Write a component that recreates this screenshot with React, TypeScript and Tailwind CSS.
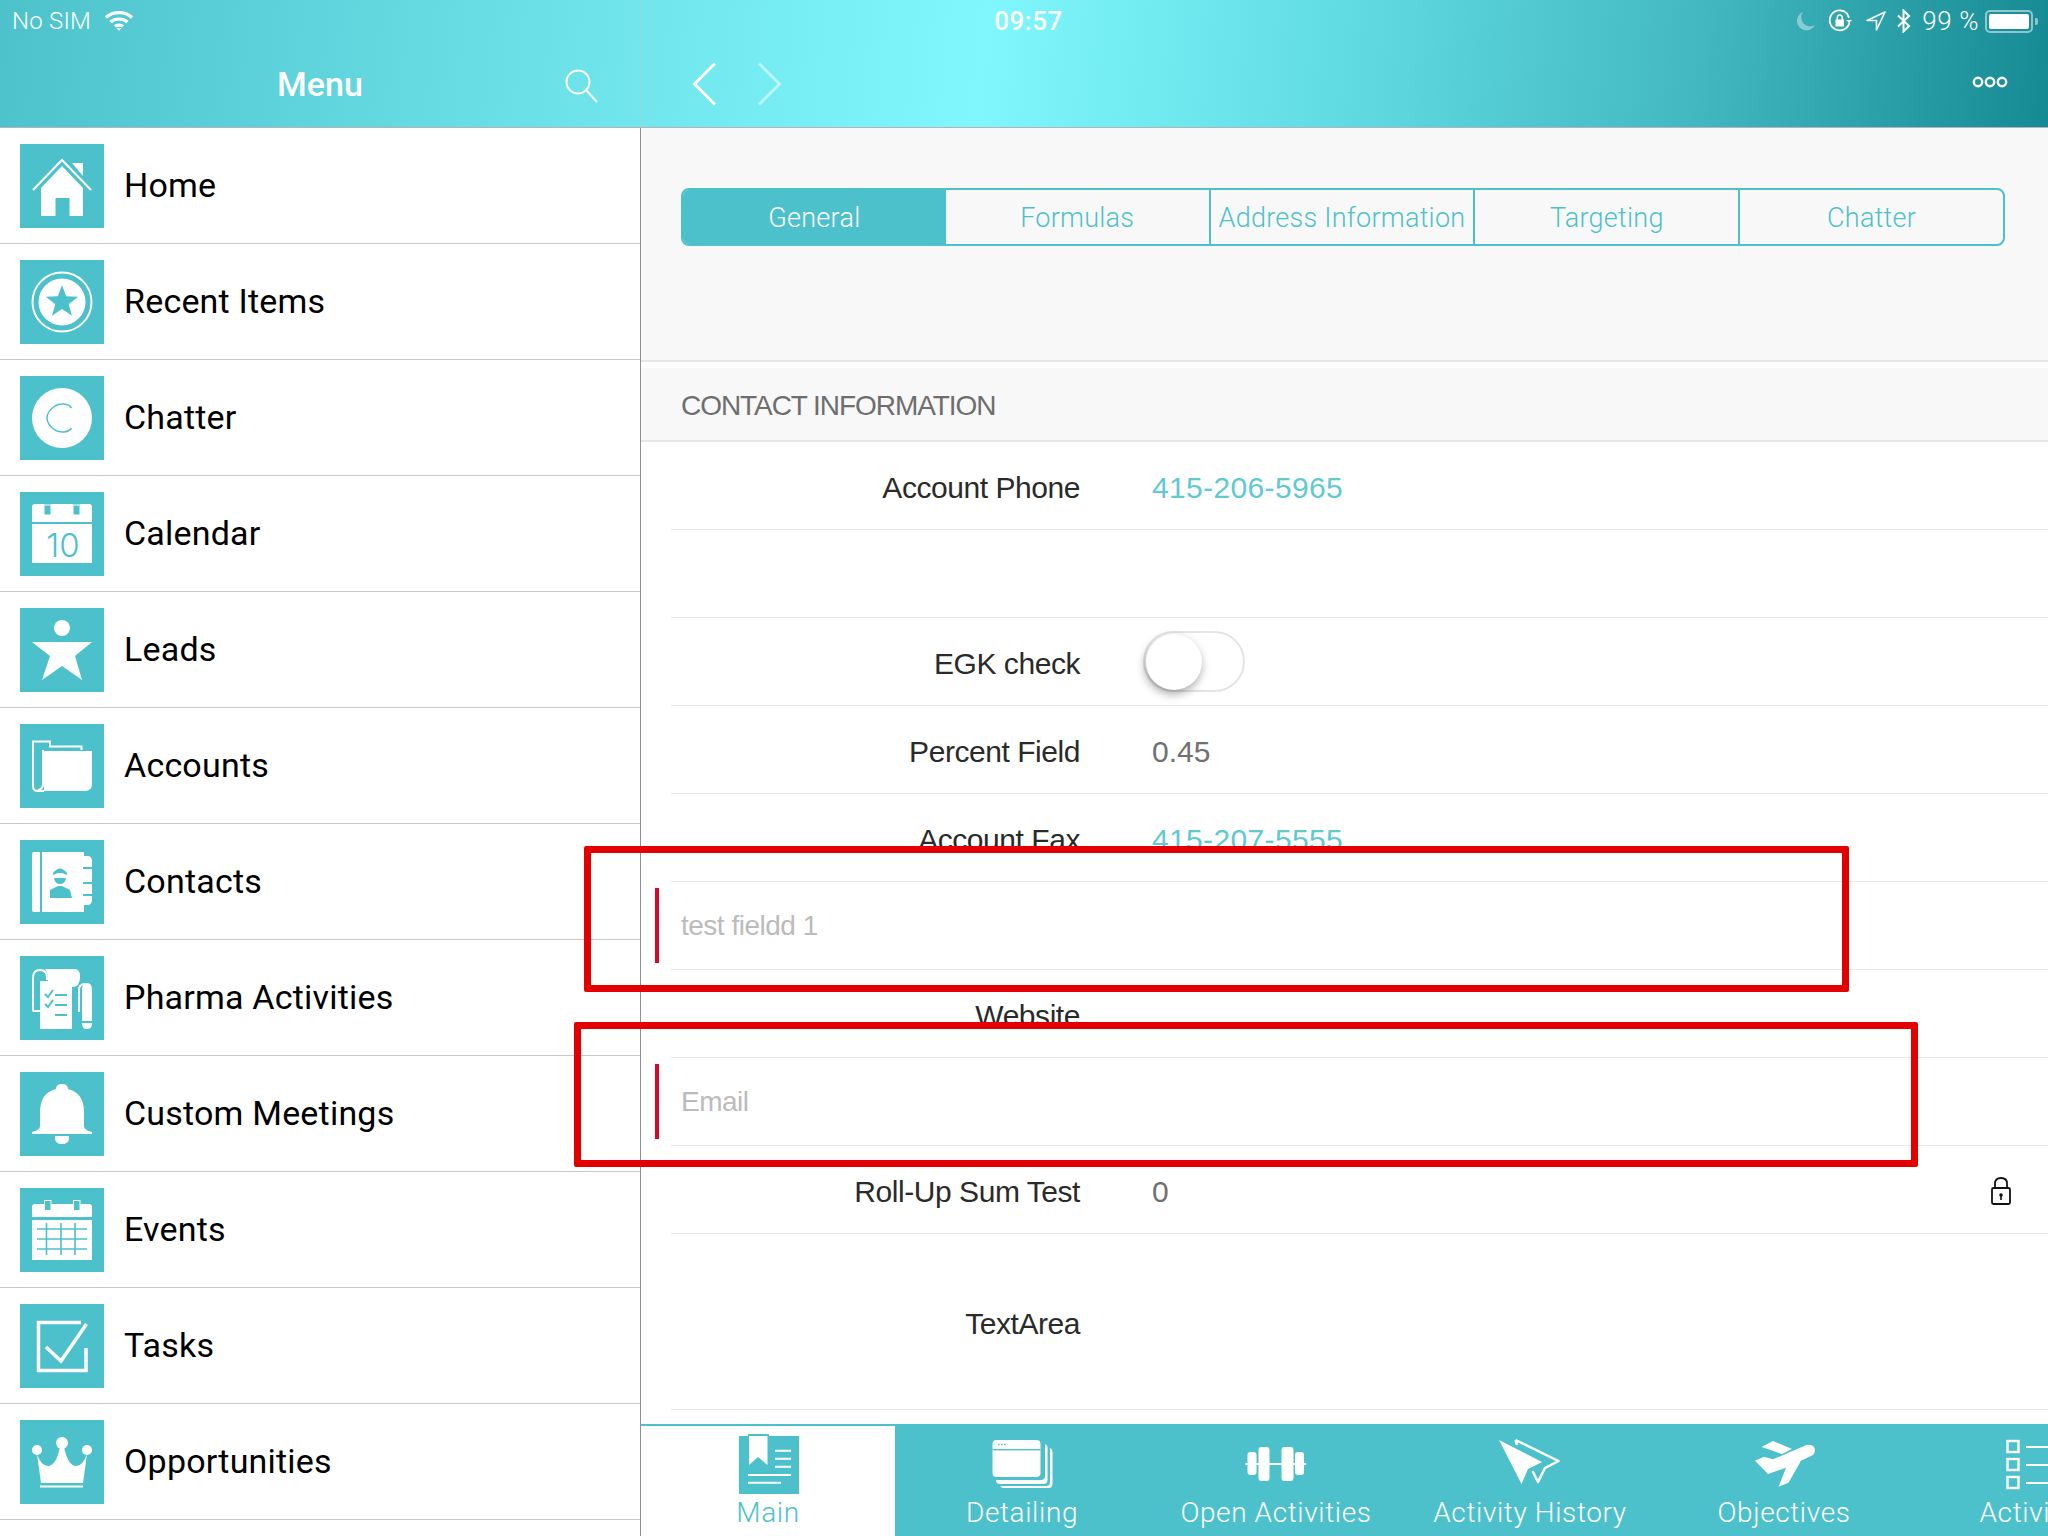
import React from "react";

const T = "#4dc1cb";

function HomeI() {
  return (
    <>
      <path d="M13 46 42 16 71 46" fill="none" stroke="#fff" strokeWidth="2" />
      <path d="M52 19H63V32Z" fill="#fff" />
      <path d="M42 22 63 44V72H49.5V54H35.5V72H21V44Z" fill="#fff" />
    </>
  );
}
function RecentI() {
  return (
    <>
      <circle cx="42" cy="42" r="29.5" fill="none" stroke="#fff" strokeWidth="2" />
      <circle cx="42" cy="42" r="23.5" fill="#fff" />
      <path d="M42 25 46.1 36.3 58.2 36.7 48.7 44.2 52 55.8 42 49 32 55.8 35.3 44.2 25.8 36.7 37.9 36.3Z" fill={T} />
    </>
  );
}
function ChatterI() {
  return (
    <>
      <circle cx="42" cy="42" r="30" fill="#fff" />
      <path d="M51.5 32C48 27 40 27 35 30 29 34 27 38 27 42 27 46 29 50 35 54 40 57 48 57 51.5 52" fill="none" stroke={T} strokeWidth="1.5" />
    </>
  );
}
function CalendarI() {
  return (
    <>
      <path d="M12 15Q12 12 15 12H24V23H31V12H53V23H60V12H69Q72 12 72 15V30H12Z" fill="#fff" />
      <rect x="24" y="13" width="7" height="10" fill={T} stroke="#fff" strokeWidth="1" />
      <rect x="53" y="13" width="7" height="10" fill={T} stroke="#fff" strokeWidth="1" />
      <rect x="12" y="32" width="60" height="39" fill="#fff" />
      <text x="43" y="65" textAnchor="middle" fontSize="33" fontWeight="300" fontFamily="Inter, sans-serif" fill={T}>10</text>
    </>
  );
}
function LeadsI() {
  return (
    <>
      <ellipse cx="42" cy="20" rx="8" ry="8" fill="#fff" />
      <path d="M12 34H72L55 48 62 72 42 58 22 72 30 48Z" fill="#fff" />
    </>
  );
}
function AccountsI() {
  return (
    <>
      <path d="M24 27H72V60Q72 67 65 67H24Z" fill="#fff" />
      <path d="M61.5 26V22.5H30V17.5H13V62Q13 67 18 67H24" fill="none" stroke="#fff" strokeWidth="2" />
      <path d="M23 26V60Q23 65 18 66" fill="none" stroke="#fff" strokeWidth="2" />
    </>
  );
}
function ContactsI() {
  return (
    <>
      <path d="M14 12H20V72H14Q12 72 12 70V14Q12 12 14 12Z" fill="#fff" />
      <rect x="22" y="12" width="42" height="60" fill="#fff" />
      <path d="M64 16H67Q72 16 72 21V60Q72 65 67 65H64Z" fill="#fff" />
      <rect x="63" y="27" width="9" height="2" fill={T} />
      <rect x="63" y="42" width="9" height="2" fill={T} />
      <rect x="63" y="54" width="9" height="2" fill={T} />
      <path d="M33 33Q40 24 47 33V35L42 33H38L33 35Z" fill={T} />
      <path d="M34 38H46Q45 44 40 44 35 44 34 38Z" fill={T} />
      <path d="M30 50 38 46H42L50 50 52 58H30Z" fill={T} />
    </>
  );
}
function PharmaI() {
  return (
    <>
      <path d="M13 55V22Q13 14 20 14 27 14 27 22V24" fill="none" stroke="#fff" strokeWidth="2" />
      <path d="M12.5 55H20" stroke="#fff" strokeWidth="2" />
      <path d="M25 13H55Q60 13 60 21 60 31 52 31V73H20V25H28Q28 16 25 13Z" fill="#fff" />
      <path d="M25 38 28 41 33 34M25 48 28 51 33 44" fill="none" stroke={T} strokeWidth="2" />
      <path d="M35 39H47M35 49H47M35 59H47" stroke={T} strokeWidth="2" />
      <path d="M59 56V34Q59 28 65 28" fill="none" stroke="#fff" strokeWidth="2" />
      <path d="M62 65V34Q62 27 67 27 72 27 72 34V65Z" fill="#fff" />
      <path d="M62 67H72V68Q72 73 67 73 62 73 62 68Z" fill="#fff" />
    </>
  );
}
function BellI() {
  return (
    <>
      <path d="M36 17Q36 12 42 12 48 12 48 17 64 21 64 40V54Q64 58 72 60V62H12V60Q20 58 20 54V40Q20 21 36 17Z" fill="#fff" />
      <path d="M35 64H49V66Q49 72 42 72 35 72 35 66Z" fill="#fff" />
    </>
  );
}
function EventsI() {
  return (
    <>
      <path d="M12 19Q12 16 15 16H69Q72 16 72 19V29H12Z" fill="#fff" />
      <rect x="24.5" y="12.5" width="6.5" height="10" fill={T} stroke="#fff" strokeWidth="1" />
      <rect x="53.5" y="12.5" width="6.5" height="10" fill={T} stroke="#fff" strokeWidth="1" />
      <rect x="12" y="32" width="60" height="40" fill="#fff" />
      <path d="M17 41H67M17 51H67M17 61H67M26.5 35V67M41 35V67M55 35V67" stroke={T} strokeWidth="1.6" />
    </>
  );
}
function TasksI() {
  return (
    <>
      <path d="M61 18.5H18.5V66.5H66V44" fill="none" stroke="#fff" strokeWidth="3.5" />
      <path d="M26 43 41 57 66.5 20" fill="none" stroke="#fff" strokeWidth="3.5" />
    </>
  );
}
function CrownI() {
  return (
    <>
      <circle cx="17" cy="30" r="5" fill="#fff" />
      <circle cx="42" cy="23" r="6" fill="#fff" />
      <circle cx="67" cy="30" r="5" fill="#fff" />
      <path d="M17 34Q21 46 28 46 36 46 40 27H44Q48 46 56 46 63 46 67 34L63 63H21Z" fill="#fff" />
      <rect x="20" y="65.5" width="43" height="2" fill="#fff" />
    </>
  );
}

function MainI() {
  return (
    <>
      <rect x="12" y="2" width="21" height="4" fill={T} />
      <rect x="3" y="4" width="60" height="58" fill={T} />
      <path d="M13 4H31.5V33L22 25 13 33Z" fill="#fff" />
      <path d="M39 18.7H55M39 26.7H55M39 34.7H55M12 43H55M12 50.7H45" stroke="#fff" strokeWidth="2" />
    </>
  );
}
function DetailI() {
  return (
    <>
      <rect x="10" y="16" width="52.5" height="40" rx="4" fill="#fff" />
      <rect x="6" y="14" width="54" height="40" rx="4" fill={T} />
      <rect x="6" y="12" width="51.5" height="40" rx="4" fill="#fff" />
      <rect x="2" y="9" width="53" height="39" rx="4" fill={T} />
      <rect x="2.5" y="8" width="48" height="37" rx="4" fill="#fff" />
      <rect x="2.5" y="17" width="48" height="1.4" fill={T} />
      <path d="M8 12.5H9.5M11 12.5H12.5M14 12.5H15.5" stroke={T} strokeWidth="1.4" />
    </>
  );
}
function DumbI() {
  return (
    <>
      <path d="M1.5 32H62" stroke="#fff" strokeWidth="2" />
      <rect x="3.5" y="20" width="9" height="23" rx="3" fill="#fff" />
      <rect x="14.5" y="15" width="11" height="34" rx="3" fill="#fff" />
      <rect x="37.5" y="15" width="12" height="34" rx="3" fill="#fff" />
      <rect x="51" y="20" width="9" height="23" rx="3" fill="#fff" />
    </>
  );
}
function HistI() {
  return (
    <>
      <path d="M1 8 44 30 30 37 23.5 52Z" fill="#fff" />
      <path d="M17.5 8 60.5 29 47 36 40 50 34.5 39M17.5 8 19 13" fill="none" stroke="#fff" strokeWidth="2.5" strokeLinejoin="round" />
    </>
  );
}
function ObjI() {
  return (
    <>
      <path d="M9.6 15 21 9 40 17 30 22Z" fill="#fff" />
      <path d="M3 28.7 12 24.7 21 27.3 54.5 13Q60 12 62.6 16 63.5 21 61 23L49 28.7 36.5 50.7 26.6 54.7 34 35.7 16 42Z" fill="#fff" />
    </>
  );
}
function ListI() {
  return (
    <>
      <rect x="1.5" y="9" width="11" height="11" fill="none" stroke="#fff" strokeWidth="2.4" />
      <rect x="1.5" y="27" width="11" height="11" fill="none" stroke="#fff" strokeWidth="2.4" />
      <rect x="1.5" y="45" width="11" height="11" fill="none" stroke="#fff" strokeWidth="2.4" />
      <path d="M20 15H62M20 33H62M20 51H62" stroke="#fff" strokeWidth="2" />
    </>
  );
}

const menu: [string, React.ReactNode][] = [
  ["Home", <HomeI />],
  ["Recent Items", <RecentI />],
  ["Chatter", <ChatterI />],
  ["Calendar", <CalendarI />],
  ["Leads", <LeadsI />],
  ["Accounts", <AccountsI />],
  ["Contacts", <ContactsI />],
  ["Pharma Activities", <PharmaI />],
  ["Custom Meetings", <BellI />],
  ["Events", <EventsI />],
  ["Tasks", <TasksI />],
  ["Opportunities", <CrownI />],
];

const tabs: [string, React.ReactNode][] = [
  ["Main", <MainI />],
  ["Detailing", <DetailI />],
  ["Open Activities", <DumbI />],
  ["Activity History", <HistI />],
  ["Objectives", <ObjI />],
  ["Activities", <ListI />],
];

function Row({ label, children }: { label?: string; children?: React.ReactNode }) {
  return (
    <div className="ml-[30px] flex h-[88px] items-center border-b border-[#e8e8e8] pt-[3px]">
      <div className="w-[409px] text-right text-[30px] tracking-[-0.45px] text-[#2a2a2a]">{label}</div>
      <div className="ml-[72px] flex flex-1 items-center text-[30px]">{children}</div>
    </div>
  );
}

function Required({ label }: { label: string }) {
  return (
    <div className="relative ml-[30px] flex h-[88px] items-center border-b border-[#e8e8e8] pl-[10px] text-[28px] tracking-[-0.5px] text-[#bbbbbb]">
      {label}
      <div className="absolute left-[-16px] top-[6px] h-[75px] w-[4px] bg-[#d9062a]" />
    </div>
  );
}

export default function App() {
  return (
    <div className="relative h-[1536px] w-[2048px] overflow-hidden bg-white font-['Liberation_Sans',Arial,sans-serif]">
      <header className="flex h-[128px] border-b border-[#b4b4b4] bg-[linear-gradient(96deg,#4ec2cb_0%,#70e6ec_31%,#7ff7fc_48%,#62dce3_65%,#42b7bf_83%,#158a92_100%)] text-white">
        <div className="relative w-[641px] border-r border-[#9fd3d8]">
          <div className="flex h-[42px] items-center pl-[12px] font-['Roboto',sans-serif] text-[24px] font-light tracking-[0.2px]">
            No SIM
            <svg className="ml-[13px]" width="30" height="22" viewBox="0 0 30 22" fill="none" stroke="#fff" strokeWidth="3.2">
              <path d="M2 7.5C9 1 21 1 28 7.5" />
              <path d="M6.5 12C11 8 19 8 23.5 12" />
              <path d="M11 16.3C13 14.6 17 14.6 19 16.3" />
              <path d="M12.5 18 15 21 17.5 18Z" fill="#fff" stroke="none" />
            </svg>
          </div>
          <div className="flex h-[85px] items-center justify-center pb-[1px] font-['Roboto',sans-serif] text-[34px] font-medium">Menu</div>
          <svg className="absolute left-[565px] top-[69px]" width="34" height="34" viewBox="0 0 34 34" fill="none" stroke="#fff" strokeWidth="2">
            <circle cx="13" cy="13" r="11.5" />
            <path d="M21 21 32 33" />
          </svg>
        </div>
        <div className="relative flex-1">
          <div className="flex h-[42px] items-center justify-center pr-[632px] font-['Roboto',sans-serif] text-[26px] font-medium tracking-[0.5px]">09:57</div>
          <div className="flex h-[85px] items-start justify-between pr-[40px] pl-[51px] pt-[20px]">
            <div className="flex gap-[40px]">
              <svg width="25" height="44" viewBox="0 0 25 44" fill="none" stroke="#fff" strokeWidth="3"><path d="M23 1.5 2.5 22 23 42.5" /></svg>
              <svg className="opacity-50" width="25" height="44" viewBox="0 0 25 44" fill="none" stroke="#fff" strokeWidth="3"><path d="M2 1.5 22.5 22 2 42.5" /></svg>
            </div>
            <svg className="mt-[14px]" width="36" height="12" viewBox="0 0 36 12" fill="none" stroke="#fff" strokeWidth="2.4">
              <circle cx="6" cy="6" r="4.2" />
              <circle cx="18" cy="6" r="4.2" />
              <circle cx="30" cy="6" r="4.2" />
            </svg>
          </div>
          <div className="absolute right-[10px] top-[8px] flex h-[26px] items-center text-[26px]">
            <svg className="opacity-40" width="20" height="20" viewBox="0 0 20 20"><path d="M7 1A9.5 9.5 0 1 0 19 14 9 9 0 0 1 7 1Z" fill="#fff" /></svg>
            <svg className="ml-[12px]" width="24" height="24" viewBox="0 0 24 24" fill="none" stroke="#fff" strokeWidth="1.8">
              <path d="M21.5 13.5A10 10 0 1 1 19 4.5L21 9" />
              <rect x="7.5" y="10.5" width="8.5" height="7" fill="#fff" stroke="none" />
              <path d="M9.3 11V8.5Q9.3 6 11.7 6 14.2 6 14.2 8.5V11" strokeWidth="1.4" />
              <path d="M18 11H24L21 14Z" fill="#fff" stroke="none" />
            </svg>
            <svg className="ml-[14px]" width="20" height="20" viewBox="0 0 20 20" fill="none" stroke="#fff" strokeWidth="1.6"><path d="M19 1 1 9.5H10.5V19Z" strokeLinejoin="round" /></svg>
            <svg className="ml-[11px]" width="14" height="24" viewBox="0 0 14 24" fill="none" stroke="#fff" strokeWidth="2"><path d="M1 6.5 12 17 6.5 22.5V1.5L12 7 1 17.5" /></svg>
            <span className="ml-[11px] font-['Roboto',sans-serif] font-light tracking-[0.6px]">99 %</span>
            <div className="ml-[6px] flex h-[23px] w-[48px] items-center rounded-[5px] border-2 border-[#ffffff80] p-[2px]">
              <div className="h-full w-full rounded-[2px] bg-white" />
            </div>
            <div className="ml-[2px] h-[7px] w-[3px] rounded-r-[2px] bg-[#ffffff80]" />
          </div>
        </div>
      </header>

      <div className="flex h-[1408px]">
        <nav className="w-[641px] shrink-0 border-r border-[#8e8e93] font-['Roboto',sans-serif]">
          {menu.map(([label, icon]) => (
            <div key={label} className="flex h-[116px] items-center border-b border-[#c8c8c8] pl-[20px]">
              <svg className="shrink-0" width="84" height="84" viewBox="0 0 84 84" style={{ background: T }}>{icon}</svg>
              <span className="ml-[20px] text-[34px] tracking-[0.2px] text-black">{label}</span>
            </div>
          ))}
        </nav>

        <main className="flex min-w-0 flex-1 flex-col">
          <div className="h-[234px] border-b-2 border-[#e6e6e6] bg-[#f8f8f8] px-[40px] pt-[60px]">
            <div className="flex h-[58px] w-[1324px] overflow-hidden rounded-[8px] border-2 border-[#4dc1cb] font-['Roboto',sans-serif] text-[27px] font-light tracking-[0.25px] text-[#4dc1cb]">
              <div className="flex flex-1 items-center justify-center bg-[#4dc1cb] pt-[2px] text-white">General</div>
              <div className="flex flex-1 items-center justify-center border-r-2 border-[#4dc1cb] pt-[2px]">Formulas</div>
              <div className="flex flex-1 items-center justify-center whitespace-nowrap border-r-2 border-[#4dc1cb] pt-[2px]">Address Information</div>
              <div className="flex flex-1 items-center justify-center border-r-2 border-[#4dc1cb] pt-[2px]">Targeting</div>
              <div className="flex flex-1 items-center justify-center pt-[2px]">Chatter</div>
            </div>
          </div>
          <div className="mt-[6px] flex h-[74px] items-center border-b-2 border-[#e6e6e6] bg-[#f8f8f8] pl-[40px] pt-[3px] text-[28px] tracking-[-1.05px] text-[#6e6e6e]">
            CONTACT INFORMATION
          </div>

          <Row label="Account Phone"><span className="tracking-[0.35px] text-[#60c9d2]">415-206-5965</span></Row>
          <Row />
          <Row label="EGK check">
            <div className="relative ml-[-9px] mt-[-3px] h-[61px] w-[102px] rounded-full border-2 border-[#e4e4e4] bg-white">
              <div className="absolute left-[1px] top-[1px] h-[56px] w-[56px] rounded-full bg-white shadow-[-1px_4px_10px_rgba(0,0,0,0.35)]" />
            </div>
          </Row>
          <Row label="Percent Field"><span className="text-[#707070]">0.45</span></Row>
          <Row label="Account Fax"><span className="tracking-[0.35px] text-[#60c9d2]">415-207-5555</span></Row>
          <Required label="test fieldd 1" />
          <Row label="Website" />
          <Required label="Email" />
          <Row label="Roll-Up Sum Test">
            <span className="text-[#707070]">0</span>
            <svg className="ml-auto mr-[36px]" width="22" height="30" viewBox="0 0 22 30" fill="none" stroke="#111" strokeWidth="1.8">
              <path d="M5 13V7.5Q5 2 11 2 17 2 17 7.5V13" />
              <rect x="2" y="12" width="18" height="16" rx="1.5" />
              <circle cx="11" cy="19" r="1.8" fill="#111" stroke="none" />
              <path d="M11 20V24" strokeWidth="1.6" />
            </svg>
          </Row>
          <div className="ml-[30px] flex h-[176px] items-center border-b border-[#e8e8e8] pt-[3px]">
            <div className="w-[409px] text-right text-[30px] tracking-[-0.45px] text-[#2a2a2a]">TextArea</div>
          </div>

          <div className="mt-[14px] flex h-[112px] border-t-2 border-[#4dc1cb] bg-[#4dc1cb] font-['Roboto',sans-serif] text-[28px] font-light tracking-[0.6px] text-white">
            {tabs.map(([label, icon], i) => (
              <div key={label} className={"flex w-[254px] shrink-0 flex-col items-center pt-[6px] " + (i === 0 ? "bg-white text-[#4dc1cb]" : "")}>
                <svg className="shrink-0" width="64" height="64" viewBox="0 0 64 64">{icon}</svg>
                <span className="mt-[-4px] whitespace-nowrap">{label}</span>
              </div>
            ))}
          </div>
        </main>
      </div>

      <div className="absolute left-[584px] top-[846px] h-[146px] w-[1265px] rounded-[2px] border-[7px] border-[#e30000]" />
      <div className="absolute left-[574px] top-[1022px] h-[145px] w-[1344px] rounded-[2px] border-[7px] border-[#e30000]" />
    </div>
  );
}
